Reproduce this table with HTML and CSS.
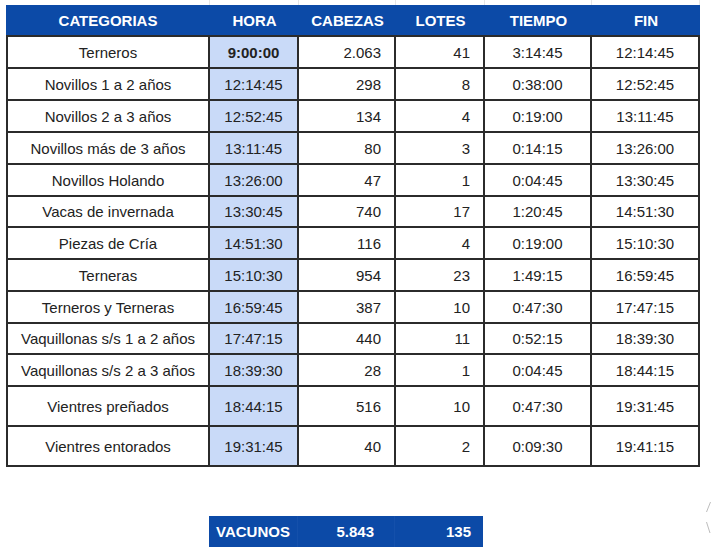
FILE: index.html
```html
<!DOCTYPE html>
<html lang="es">
<head>
<meta charset="utf-8">
<title>Cronograma</title>
<link rel="stylesheet" href="styles.css">
</head>
<body>
<div class="sheet">
  <div class="gridlines">
    <span class="g g1"></span><span class="g g2"></span><span class="g g3"></span><span class="g g4"></span><span class="g g5"></span><span class="g g6"></span>
  </div>
  <table class="tabla">
    <colgroup>
      <col class="c1"><col class="c2"><col class="c3"><col class="c4"><col class="c5"><col class="c6">
    </colgroup>
    <thead>
      <tr>
        <th>CATEGORIAS</th><th>HORA</th><th>CABEZAS</th><th>LOTES</th><th>TIEMPO</th><th>FIN</th>
      </tr>
    </thead>
    <tbody>
      <tr class="first"><td>Terneros</td><td class="hora b">9:00:00</td><td class="num">2.063</td><td class="lot">41</td><td>3:14:45</td><td>12:14:45</td></tr>
      <tr><td>Novillos 1 a 2 años</td><td class="hora">12:14:45</td><td class="num">298</td><td class="lot">8</td><td>0:38:00</td><td>12:52:45</td></tr>
      <tr><td>Novillos 2 a 3 años</td><td class="hora">12:52:45</td><td class="num">134</td><td class="lot">4</td><td>0:19:00</td><td>13:11:45</td></tr>
      <tr><td>Novillos más de 3 años</td><td class="hora">13:11:45</td><td class="num">80</td><td class="lot">3</td><td>0:14:15</td><td>13:26:00</td></tr>
      <tr><td>Novillos Holando</td><td class="hora">13:26:00</td><td class="num">47</td><td class="lot">1</td><td>0:04:45</td><td>13:30:45</td></tr>
      <tr class="r31"><td>Vacas de invernada</td><td class="hora">13:30:45</td><td class="num">740</td><td class="lot">17</td><td>1:20:45</td><td>14:51:30</td></tr>
      <tr><td>Piezas de Cría</td><td class="hora">14:51:30</td><td class="num">116</td><td class="lot">4</td><td>0:19:00</td><td>15:10:30</td></tr>
      <tr><td>Terneras</td><td class="hora">15:10:30</td><td class="num">954</td><td class="lot">23</td><td>1:49:15</td><td>16:59:45</td></tr>
      <tr><td>Terneros y Terneras</td><td class="hora">16:59:45</td><td class="num">387</td><td class="lot">10</td><td>0:47:30</td><td>17:47:15</td></tr>
      <tr class="r31"><td>Vaquillonas s/s 1 a 2 años</td><td class="hora">17:47:15</td><td class="num">440</td><td class="lot">11</td><td>0:52:15</td><td>18:39:30</td></tr>
      <tr><td>Vaquillonas s/s 2 a 3 años</td><td class="hora">18:39:30</td><td class="num">28</td><td class="lot">1</td><td>0:04:45</td><td>18:44:15</td></tr>
      <tr class="r40"><td>Vientres preñados</td><td class="hora">18:44:15</td><td class="num">516</td><td class="lot">10</td><td>0:47:30</td><td>19:31:45</td></tr>
      <tr class="r40"><td>Vientres entorados</td><td class="hora">19:31:45</td><td class="num">40</td><td class="lot">2</td><td>0:09:30</td><td>19:41:15</td></tr>
    </tbody>
  </table>
  <div class="total">
    <div class="t1">VACUNOS</div>
    <div class="t2">5.843</div>
    <div class="t3">135</div>
  </div>
  <svg class="edge" width="8" height="40" viewBox="0 0 8 40" aria-hidden="true">
    <path d="M7.5 0 L3.5 10" stroke="#bdbdbd" stroke-width="1" fill="none"/>
    <path d="M3.5 20 L7 31" stroke="#bdbdbd" stroke-width="1" fill="none"/>
  </svg>
</div>
</body>
</html>
```
FILE: styles.css
```css
* { box-sizing: border-box; }
html, body {
  margin: 0;
  padding: 0;
  background: #ffffff;
}
body {
  font-family: "Liberation Sans", Arial, sans-serif;
  color: #222222;
  width: 711px;
  height: 553px;
  overflow: hidden;
}
.sheet {
  position: relative;
  padding: 5px 0 0 6px;
  height: 553px;
}
.gridlines {
  position: absolute;
  left: 0;
  top: 0;
  width: 711px;
  height: 5px;
}
.g {
  position: absolute;
  top: 0;
  width: 1px;
  height: 5px;
  background: #e6e6e6;
}
.g1 { left: 209px; }
.g2 { left: 298px; }
.g3 { left: 395px; }
.g4 { left: 484px; }
.g5 { left: 591px; }
.g6 { left: 699px; }

.tabla {
  border-collapse: separate;
  border-spacing: 0;
  table-layout: fixed;
  width: 694px;
  font-size: 15px;
}
.c1 { width: 204px; }
.c2 { width: 89px; }
.c3 { width: 97px; }
.c4 { width: 89px; }
.c5 { width: 107px; }
.c6 { width: 108px; }

.tabla th {
  background: #0c4aa7;
  color: #ffffff;
  font-weight: bold;
  height: 30px;
  padding: 0;
  text-align: center;
  vertical-align: middle;
  border: 0;
}
.tabla td {
  height: 32px;
  padding: 0;
  text-align: center;
  vertical-align: middle;
  border-right: 2px solid #2b2b2b;
  border-bottom: 2px solid #2b2b2b;
  white-space: nowrap;
}
.tabla td:first-child {
  border-left: 2px solid #2b2b2b;
}
.tabla tr.first td {
  border-top: 2px solid #2b2b2b;
  height: 34px;
}
.tabla tr.r31 td { height: 31px; }
.tabla tr.r40 td { height: 40px; }

.tabla td.hora { background: #c9daf8; }
.tabla td.b { font-weight: bold; }
.tabla td.num { text-align: right; padding-right: 13px; }
.tabla td.lot { text-align: right; padding-right: 13px; }

.total {
  display: flex;
  margin: 49px 0 0 203px;
  width: 274px;
  height: 31px;
  background: #0c4aa7;
  color: #ffffff;
  font-size: 15px;
  font-weight: bold;
}
.total div {
  display: flex;
  align-items: center;
  height: 100%;
}
.t1 { width: 89px; padding-left: 7px; border-right: 1px solid #1450ab; }
.t2 { width: 97px; justify-content: flex-end; padding-right: 20px; border-right: 1px solid #1450ab; }
.t3 { width: 88px; justify-content: flex-end; padding-right: 12px; }

.edge {
  position: absolute;
  left: 703px;
  top: 502px;
}
```
